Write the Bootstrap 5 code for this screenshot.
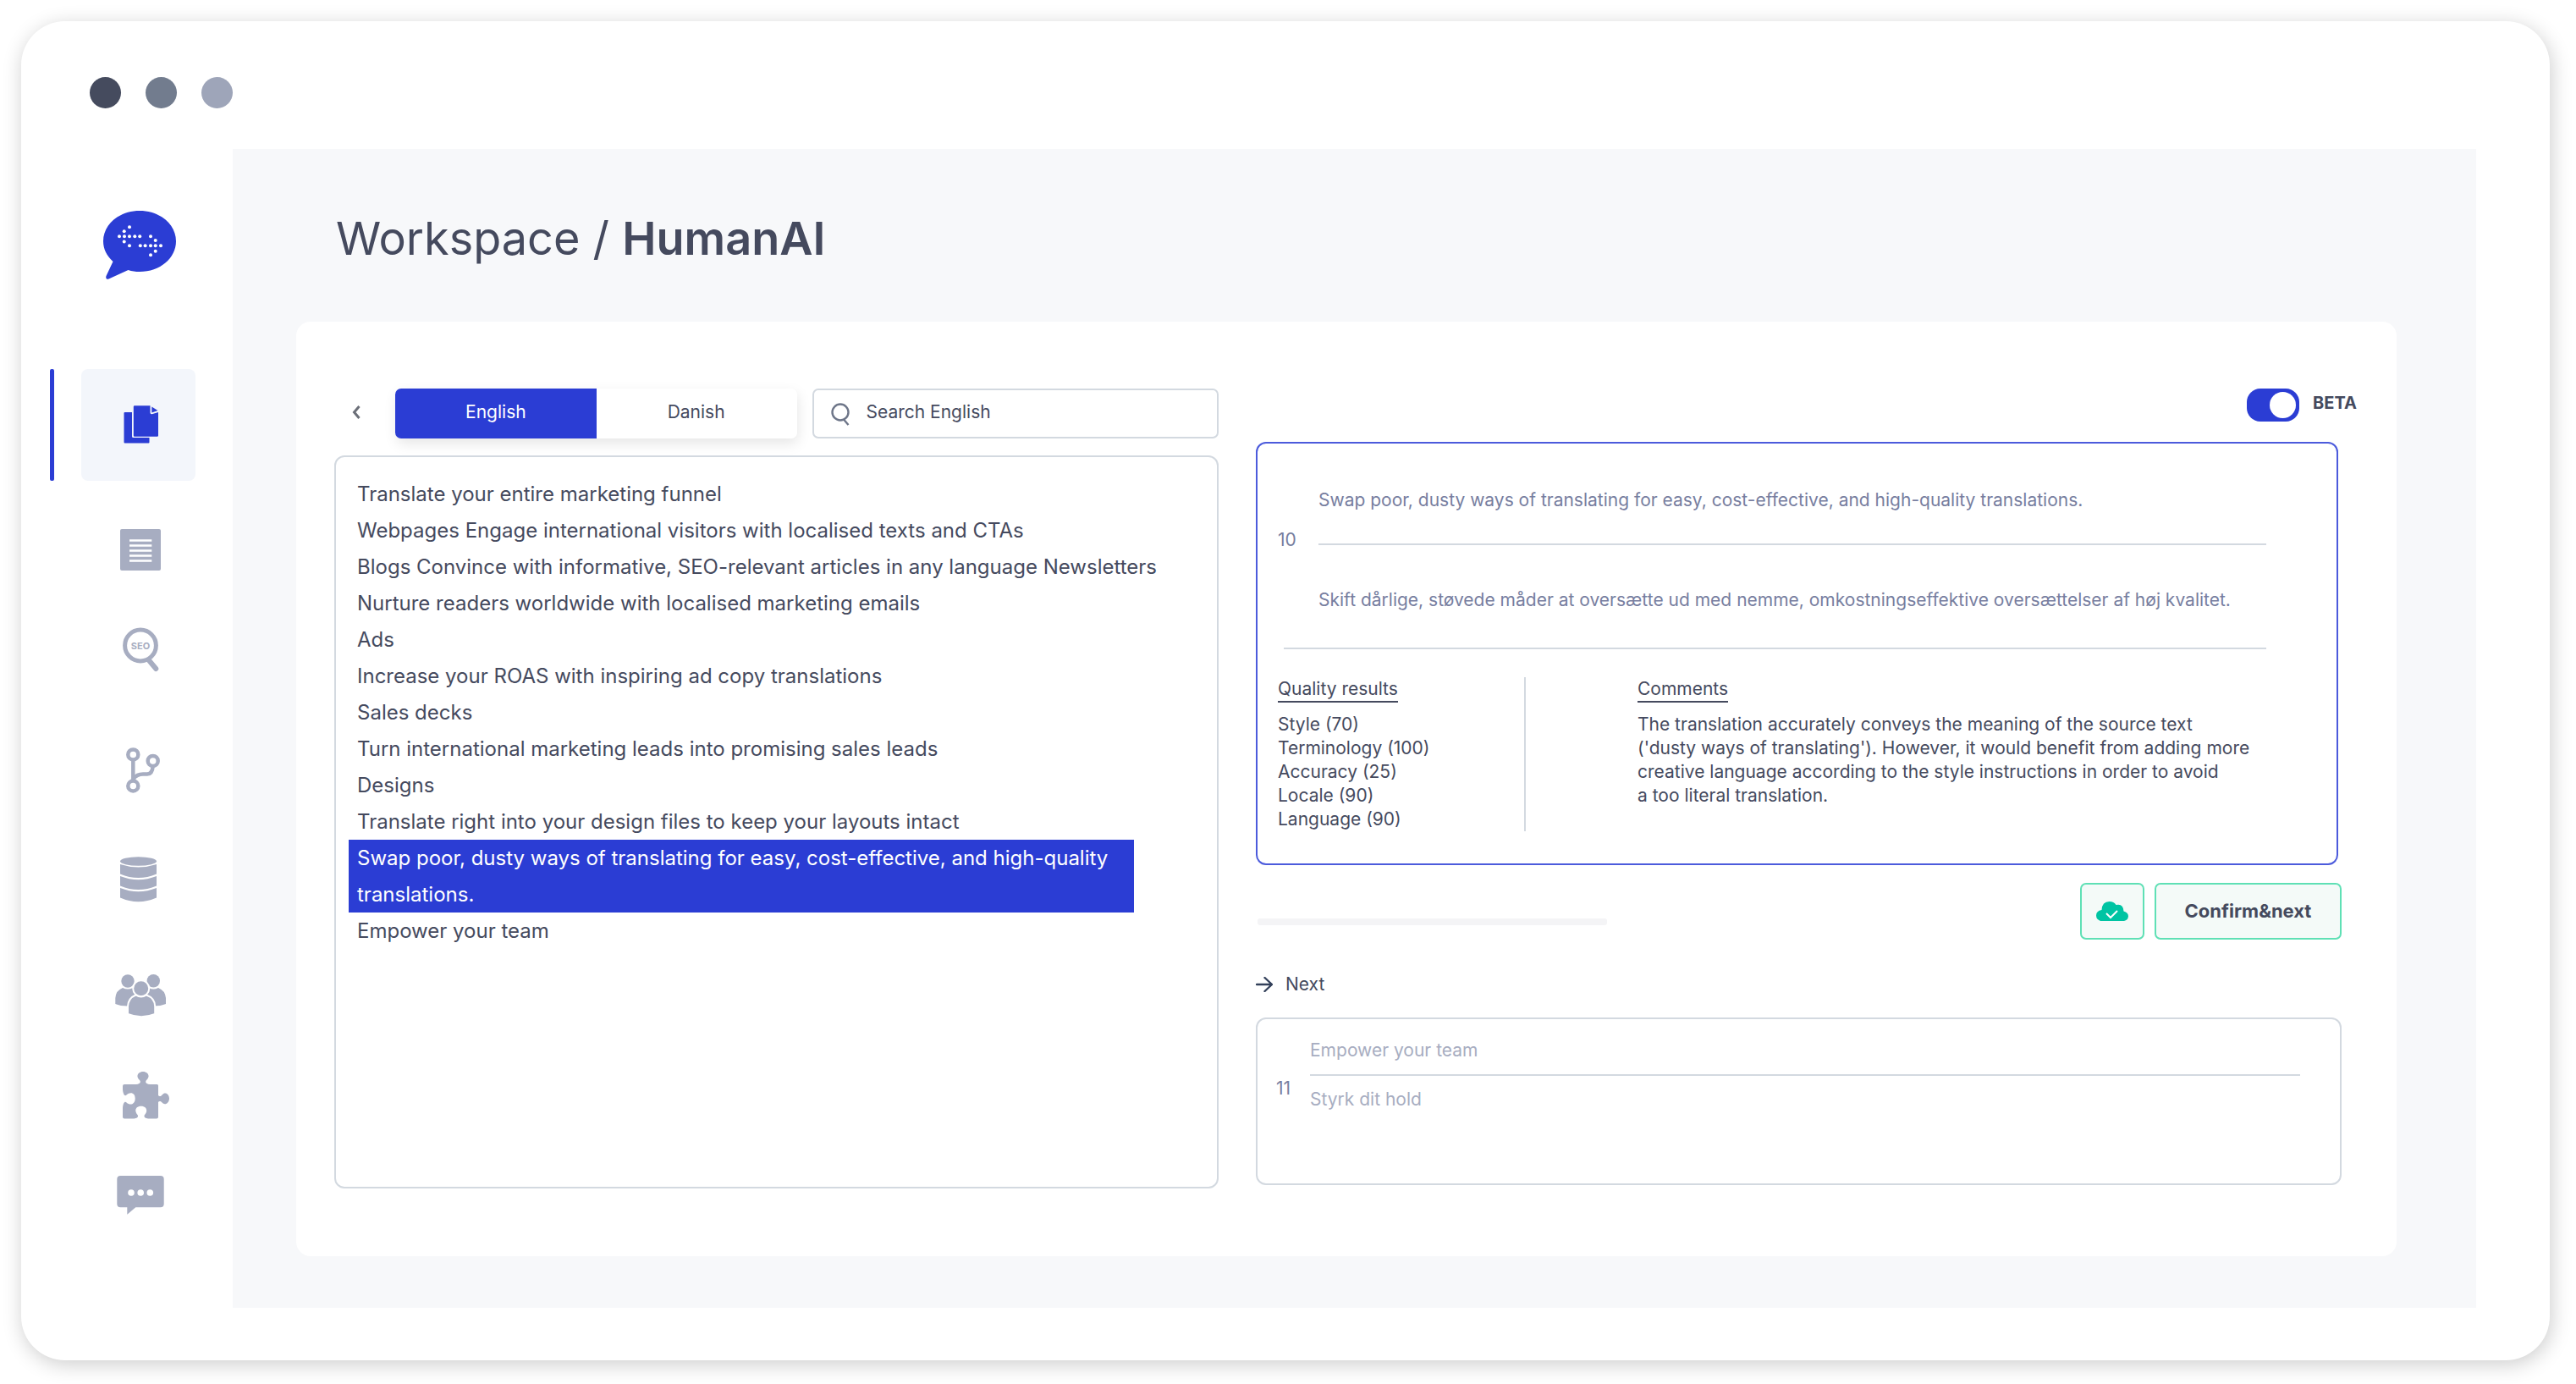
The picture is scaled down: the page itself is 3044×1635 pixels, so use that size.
<!DOCTYPE html>
<html lang="en">
<head>
<meta charset="utf-8">
<meta name="viewport" content="width=device-width, initial-scale=1">
<title>Workspace / HumanAI</title>
<link href="https://cdn.jsdelivr.net/npm/bootstrap@5.3.0/dist/css/bootstrap.min.css" rel="stylesheet">
<style>
  :root { --brand: #2b3dd4; --ink: #454a5e; --muted-ink: #777e9f; --faint: #a7adc1; --rule: #d3d9e0; --mint: #5fe0b5; }
  body { font-family: Inter, "Noto Sans", sans-serif; color: var(--ink); background: #fff; font-size: 21px; line-height: 28px; padding: 25px 31px 28px 25px; }
  .app-window { border-radius: 52px; box-shadow: 2px 5px 24px rgba(0,0,0,.2); background: #fff; padding-bottom: 62px; }
  .window-bar { padding: 66px 81px 48px; gap: 29px; }
  .win-dot { width: 37px; height: 37px; border-radius: 50%; }
  .app-body { padding-right: 87px; }

  .side-nav { width: 250px; padding: 73px 0 0 34px; flex: none; }
  .brand-link { margin-left: 63px; margin-bottom: 105px; }
  .side-nav svg { display: block; overflow: visible; }
  .side-nav a { color: var(--faint); }
  .nav-current { gap: 32px; margin-bottom: 50px; }
  .nav-marker { width: 5px; border-radius: 2px; background: var(--brand); }
  .side-nav .nav-tile { width: 135px; height: 132px; border-radius: 8px; background: #f3f6fb; color: var(--brand); }
  .icon-item { margin-left: 75px; margin-bottom: 54px; }
  .gap-wide { margin-bottom: 78px; }
  .gap-mid { margin-bottom: 65px; }
  .gap-data { margin-bottom: 73px; }

  .workspace { background: #f7f8fa; padding: 74px 94px 61px 75px; min-width: 0; }
  .page-title { font-size: 54px; line-height: 64px; margin: 0 0 66px 47px; font-weight: 400; }
  .page-title strong { font-weight: 600; }
  .panel { border-radius: 17px; background: #fff; padding: 79px 47px 80px 45px; gap: 44px; }
  .source-col { flex: 1045 1 0; min-width: 0; gap: 20px; }
  .review-col { flex: 1301 1 0; min-width: 0; }

  .back-btn { width: 72px; padding: 0 0 4px 21px; text-align: left; border: 0; flex: none; }
  .tool-row { height: 59px; }
  .lang-switch { flex: 475 1 0; margin-right: 19px; border-radius: 7px; box-shadow: 2px 6px 16px rgba(0,0,0,.1); }
  .lang-switch .btn { flex: 1 1 0; border: 0; border-radius: 7px; font-size: 21px; color: var(--ink); background: #fff; padding: 4px 12px 8px; }
  .lang-switch .btn.active { background: var(--brand); color: #fff; }
  .search-box { flex: 456 1 0; border: 2px solid var(--rule); border-radius: 7px; padding-left: 20px; gap: 18px; }
  .search-box input { border: 0; padding: 0 0 3px; font-size: 21px; color: var(--ink); box-shadow: none; }
  .search-box input::placeholder { color: var(--ink); opacity: 1; }

  .text-box { border: 2px solid var(--rule); border-radius: 12px; }
  .segment-list { padding: 22px 0; margin: 0; list-style: none; font-size: 24px; line-height: 43px; }
  .segment-list li { padding: 0 25px; }
  .segment-list li.selected { background: var(--brand); color: #fff; margin: 0 98px 0 15px; padding: 0 10px; }

  .beta-row { gap: 16px; height: 39px; margin-bottom: 24px; }
  .beta-row .form-check-input { width: 62px; height: 39px; margin: 0; border-radius: 16px; background-size: 54px 31px;
    background-position: center; background-repeat: no-repeat; border: 0; background-color: var(--brand);
    background-image: url("data:image/svg+xml,%3csvg xmlns='http://www.w3.org/2000/svg' viewBox='0 0 54 31'%3e%3ccircle cx='38.500' cy='15.500' r='15.500' fill='%23fff'/%3e%3c/svg%3e"); }
  .beta-label { font-size: 20px; font-weight: 700; line-height: 34px; }
  .active-card { border: 2px solid #4c5bdc; border-radius: 12px; padding: 53px 83px 38px 24px; margin-right: 22px; }
  .seg-no { width: 48px; flex: none; color: var(--muted-ink); padding-top: 47px; }
  .seg-text { color: var(--muted-ink); }
  .rule-line { border: 0; border-top: 2px solid var(--rule); opacity: 1; margin: 0; }
  .rule-a { margin: 37px 0 51px; }
  .rule-b { margin: 42px 0 33px 7px; }
  .quality-col { width: 293px; border-right: 2px solid var(--rule); flex: none; }
  .comment-col { padding-left: 132px; }
  .sub-head { display: inline-block; font-size: 21px; line-height: 28px; border-bottom: 2px solid var(--ink); margin: 0 0 12px; font-weight: 400; vertical-align: top; }

  .action-row { margin: 21px 18px 0 2px; gap: 12px; height: 67px; }
  .progress-line { height: 8px; border-radius: 3px; background: #f4f4f6; width: 43%; margin-top: 25px; }
  .action-row .btn { border: 2px solid var(--mint); border-radius: 7px; background: #f4faf8; color: var(--ink); }
  .save-btn { width: 76px; padding: 0; }
  .confirm-btn { width: 221px; font-size: 22px; font-weight: 700; padding: 0; }
  .next-row { gap: 15px; margin: 39px 0 25px; line-height: 28px; }
  .next-card { border: 2px solid var(--rule); border-radius: 12px; padding: 23px 47px 85px 22px; margin: 0 18px 4px 0; }
  .next-no { width: 40px; flex: none; color: var(--muted-ink); padding-top: 45px; }
  .next-text { color: var(--faint); }
  .next-rule { margin: 14px 0 14px; }
</style>
</head>
<body>
<div class="app-window">
  <header class="window-bar d-flex">
    <span class="win-dot" style="background:#454b5e"></span>
    <span class="win-dot" style="background:#727c8e"></span>
    <span class="win-dot" style="background:#9ea5b9"></span>
  </header>

  <div class="app-body d-flex">
    <nav class="side-nav d-flex flex-column align-items-start" aria-label="Main">
      <a class="brand-link" href="#" aria-label="Home">
        <svg width="86" height="82" viewBox="0 0 86 82">
          <path fill="#2b3dd4" d="M43 0C67 0 86 16 86 36S67 72 43 72c-5 0-9-.6-13.500-2L6.500 80.500C4 81.500 2.600 79.500 3.500 77L11.500 60C4 53 0 45 0 36 0 16 19 0 43 0z"/>
          <g fill="#fff"><circle cx="31" cy="19.300" r="2"/><circle cx="24.700" cy="24.300" r="2"/><circle cx="19" cy="30.300" r="2"/><circle cx="25" cy="30.300" r="2"/><circle cx="31" cy="30.300" r="2"/><circle cx="37.300" cy="30.300" r="2"/><circle cx="43.200" cy="30.300" r="2"/><circle cx="24.700" cy="36.600" r="2"/><circle cx="31" cy="41.300" r="2"/>
          <circle cx="56" cy="30.300" r="2"/><circle cx="61.700" cy="35" r="2"/><circle cx="43.800" cy="41.300" r="2"/><circle cx="49.600" cy="41.300" r="2"/><circle cx="56" cy="41.300" r="2"/><circle cx="61.700" cy="41.300" r="2"/><circle cx="68" cy="41.300" r="2"/><circle cx="61.700" cy="47.700" r="2"/><circle cx="56" cy="52.300" r="2"/></g>
        </svg>
      </a>
      <div class="nav-current d-flex">
        <span class="nav-marker"></span>
        <a class="nav-tile d-flex align-items-center justify-content-center" href="#" aria-label="Documents">
          <svg width="64" height="64" viewBox="0 0 64 64" fill="currentColor">
            <path d="M15.500 17H24V45.500q0 1.500 1.500 1.500H44.500v5.500q0 1-1 1h-28q-1 0-1-1V18q0-1 1-1z"/>
            <path d="M27 9.300H45.500V17.500q0 2 2 1.800L55 17V44.500q0 1.200-1.200 1.200H27q-1.200 0-1.200-1.200V10.500q0-1.200 1.200-1.200z"/>
            <path d="M47.300 10.500L54.500 15 47.300 17.500z"/>
          </svg>
        </a>
      </div>
      <a class="icon-item" href="#" aria-label="Text">
        <svg width="64" height="64" viewBox="0 0 64 64"><rect x="8" y="7" width="48" height="49" rx="2" fill="currentColor"/><path d="M19 20.500H45.300M19 26.500H45.300M19 32.500H45.300M19 38.500H45.300M19 44.500H45.300" stroke="#fff" stroke-width="2.400"/></svg>
      </a>
      <a class="icon-item gap-wide" href="#" aria-label="SEO">
        <svg width="64" height="64" viewBox="0 0 64 64" fill="none" stroke="currentColor"><circle cx="32" cy="26.500" r="18.400" stroke-width="5"/><path d="M41.500 43.500L50.300 54" stroke-width="6" stroke-linecap="round"/><text x="32" y="30.500" text-anchor="middle" font-size="11" font-weight="700" fill="currentColor" stroke="none">SEO</text></svg>
      </a>
      <a class="icon-item gap-mid" href="#" aria-label="Workflow">
        <svg width="64" height="64" viewBox="0 0 64 64" fill="none" stroke="currentColor" stroke-width="4.500"><circle cx="23.300" cy="13.400" r="6"/><circle cx="46.700" cy="20.900" r="6"/><circle cx="23.300" cy="50.500" r="6"/><path d="M23.300 19.500V44.500M23.800 42C27 37.500 31 36.500 35 36.500H40C44.500 36.500 46.300 32.500 46.700 27"/></svg>
      </a>
      <a class="icon-item gap-data" href="#" aria-label="Database">
        <svg width="64" height="64" viewBox="0 0 64 64" fill="currentColor"><ellipse cx="29.500" cy="10.500" rx="21.500" ry="5.200"/><path d="M8 14Q29.500 21 51 14V25.500Q29.500 34.500 8 25.500zM8 28Q29.500 36.500 51 28V39.500Q29.500 48.500 8 39.500zM8 42Q29.500 50.500 51 42V53.500Q29.500 63 8 53.500z"/></svg>
      </a>
      <a class="icon-item" href="#" aria-label="Team">
        <svg width="64" height="64" viewBox="0 0 64 64" fill="currentColor" stroke="#fff" stroke-width="2"><g stroke="none"><circle cx="17" cy="15" r="7.700"/><circle cx="47.300" cy="14.700" r="7.700"/><path d="M11 23Q17 26 23 23 30 30 30 40L17 44.500Q8 44.500 2.300 42V35Q3 26 11 23zM53 23Q47 26 42 23 35 30 35 40L47 44.500Q56 44.500 62 42V35Q61 26 53 23z"/></g><circle cx="32.700" cy="23.700" r="9.500"/><path d="M26.500 31.500Q32.700 35.500 39 31.500 49 35 49.200 45V54Q33 60.500 17 54V45Q17.500 35 26.500 31.500z"/></svg>
      </a>
      <a class="icon-item" href="#" aria-label="Integrations">
        <svg width="64" height="64" viewBox="0 0 64 64" fill="currentColor"><path d="M13 19H27C31 19 33.500 16.500 30.500 13.500 26 9 29.500 4 35 4S44 9 39.500 13.500C36.500 16.500 39 19 43 19H51.500Q53 19 53 20.500V32C54 33.500 56 33.500 57.500 31.500 61 27 66 30.500 66 35.700S61 44.500 57.500 40.500C56 38.500 54 38.500 53 40V57.500Q53 59.500 51 59.500H41C37 59 35.500 57 37 55 41 50.500 39.500 44.700 32.700 44.700S24.500 50.500 28.500 55C30 57 28.500 59 24.500 59.500H13Q11 59.500 11 57.500V47C11.500 41 13.500 38.500 15.500 40.500 20 44.500 25.700 42.500 25.700 35.700S20 27.500 15.500 31.500C13.500 33.500 11.500 31 11 25V21Q11 19 13 19z"/></svg>
      </a>
      <a class="icon-item mb-0" href="#" aria-label="Messages">
        <svg width="64" height="64" viewBox="0 0 64 64" fill="currentColor"><path d="M8.300 9H55.700q4 0 4 4V42.300q0 4-4 4H26.300L16.300 54.700V46.300H8.300q-4 0-4-4V13q0-4 4-4z"/><g fill="#fff"><circle cx="21" cy="29" r="3.800"/><circle cx="32.200" cy="29" r="3.800"/><circle cx="43.300" cy="29" r="3.800"/></g></svg>
      </a>
    </nav>

    <main class="workspace flex-grow-1">
      <h1 class="page-title">Workspace / <strong>HumanAI</strong></h1>
      <div class="panel d-flex">

        <section class="source-col d-flex flex-column">
          <div class="tool-row d-flex">
            <button class="back-btn btn" type="button" aria-label="Back">
              <svg class="d-block" width="10" height="16" viewBox="0 0 10 16" fill="none" stroke="#6b6f78" stroke-width="3"><path d="M8.500 1L2.500 8 8.500 15"/></svg>
            </button>
            <div class="lang-switch btn-group" role="group" aria-label="Language">
              <button type="button" class="btn active">English</button>
              <button type="button" class="btn">Danish</button>
            </div>
            <label class="search-box d-flex align-items-center">
              <svg class="flex-shrink-0" width="23" height="28" viewBox="0 0 23 28" fill="none" stroke="#6e7689" stroke-width="2.400"><circle cx="11" cy="12" r="9.500"/><path d="M15 20.500L20.500 27"/></svg>
              <input class="form-control bg-transparent" type="search" placeholder="Search English" aria-label="Search English">
            </label>
          </div>
          <ul class="segment-list text-box flex-grow-1">
            <li>Translate your entire marketing funnel</li>
            <li>Webpages Engage international visitors with localised texts and CTAs</li>
            <li>Blogs Convince with informative, SEO-relevant articles in any language Newsletters</li>
            <li>Nurture readers worldwide with localised marketing emails</li>
            <li>Ads</li>
            <li>Increase your ROAS with inspiring ad copy translations</li>
            <li>Sales decks</li>
            <li>Turn international marketing leads into promising sales leads</li>
            <li>Designs</li>
            <li>Translate right into your design files to keep your layouts intact</li>
            <li class="selected">Swap poor, dusty ways of translating for easy, cost-effective, and high-quality translations.</li>
            <li>Empower your team</li>
          </ul>
        </section>

        <section class="review-col">
          <div class="beta-row d-flex justify-content-end">
            <input class="form-check-input" type="checkbox" role="switch" id="beta" checked>
            <label class="beta-label" for="beta">BETA</label>
          </div>

          <article class="active-card">
            <div class="d-flex">
              <div class="seg-no">10</div>
              <div class="flex-grow-1">
                <div class="seg-text">Swap poor, dusty ways of translating for easy, cost-effective, and high-quality translations.</div>
                <hr class="rule-line rule-a">
                <div class="seg-text" lang="da">Skift dårlige, støvede måder at oversætte ud med nemme, omkostningseffektive oversættelser af høj kvalitet.</div>
              </div>
            </div>
            <hr class="rule-line rule-b">
            <div class="d-flex">
              <div class="quality-col">
                <h2 class="sub-head">Quality results</h2>
                <div>Style (70)</div>
                <div>Terminology (100)</div>
                <div>Accuracy (25)</div>
                <div>Locale (90)</div>
                <div>Language (90)</div>
              </div>
              <div class="comment-col">
                <h2 class="sub-head">Comments</h2>
                <p class="mb-0">The translation accurately conveys the meaning of the source text<br>('dusty ways of translating'). However, it would benefit from adding more<br>creative language according to the style instructions in order to avoid<br>a too literal translation.</p>
              </div>
            </div>
          </article>

          <div class="action-row d-flex align-items-stretch">
            <div class="flex-grow-1 d-flex align-items-center"><div class="progress-line"></div></div>
            <button class="save-btn btn" type="button" aria-label="Save">
              <svg width="38" height="24" viewBox="0 0 38 24"><path fill="#00c4a3" d="M5 23Q0 21 0 16.500 0 11 6.500 10 7 0 15.500 0 21 0 23.500 4 32 2 32.500 11.500 38 13 38 17.500 37.500 22 33 23z"/><path d="M12 14L17 19 25 11" fill="none" stroke="#fff" stroke-width="2"/></svg>
            </button>
            <button class="confirm-btn btn" type="button">Confirm&amp;next</button>
          </div>

          <div class="next-row d-flex align-items-center">
            <svg width="20" height="18" viewBox="0 0 20 18" fill="none" stroke="#33405a" stroke-width="2.400" stroke-linecap="round" stroke-linejoin="round"><path d="M1 9H19M10.500 1L19 9 10.500 17"/></svg>
            <span>Next</span>
          </div>

          <article class="next-card d-flex">
            <div class="next-no">11</div>
            <div class="flex-grow-1 next-text">
              <div>Empower your team</div>
              <hr class="rule-line next-rule">
              <div lang="da">Styrk dit hold</div>
            </div>
          </article>
        </section>
      </div>
    </main>
  </div>
</div>
<script src="https://cdn.jsdelivr.net/npm/bootstrap@5.3.0/dist/js/bootstrap.bundle.min.js"></script>
</body>
</html>
